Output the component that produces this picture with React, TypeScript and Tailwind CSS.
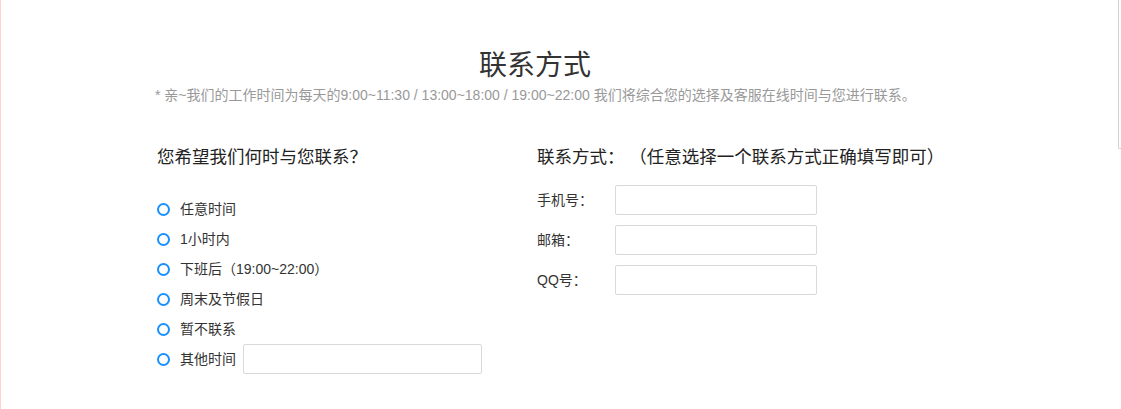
import React from "react";

const font = { fontFamily: '"Liberation Sans", Arial, "Noto Sans CJK SC", sans-serif' };

function Circle() {
  return <span className="box-border block h-[13px] w-[13px] shrink-0 rounded-full border-2 border-[#1890ff] bg-white" />;
}

function Radio({ children }: { children: React.ReactNode }) {
  return (
    <div className="flex h-[30px] items-center">
      <Circle />
      <span className="ml-[10px] text-[14px] text-[#333]">{children}</span>
    </div>
  );
}

function Field({ label }: { label: string }) {
  return (
    <div className="flex h-[30px] items-center">
      <span className="w-[78px] shrink-0 text-[14px] text-[#333]">{label}</span>
      <input className="box-border h-[30px] w-[202px] rounded-[2px] border border-[#d9d9d9] bg-white outline-none" />
    </div>
  );
}

export default function App() {
  return (
    <div className="flex h-[409px] w-[1121px] overflow-hidden bg-white" style={font}>
      <div className="w-px shrink-0 bg-[#ffd3cb]" />
      <div className="flex-1">
        <div className="box-content w-[760px] pl-[154px] pt-[46px]">
          <div className="text-center text-[28px] leading-[40px] text-[#333]">联系方式</div>
          <div className="mt-[-1px] whitespace-nowrap text-center text-[14px] leading-[20px] text-[#999]">
            * 亲~我们的工作时间为每天的9:00~11:30 / 13:00~18:00 / 19:00~22:00 我们将综合您的选择及客服在线时间与您进行联系。
          </div>
          <div className="mt-[40px] flex">
            <div className="w-[382px] shrink-0 pl-[2px]">
              <div className="text-[17.5px] leading-[24px] text-[#222]">您希望我们何时与您联系？</div>
              <div className="mt-[25px] flex flex-col">
                <Radio>任意时间</Radio>
                <Radio>1小时内</Radio>
                <Radio>下班后（19:00~22:00）</Radio>
                <Radio>周末及节假日</Radio>
                <Radio>暂不联系</Radio>
                <div className="flex h-[30px] items-center">
                  <Circle />
                  <span className="ml-[10px] text-[14px] text-[#333]">其他时间</span>
                  <input className="ml-[7px] box-border h-[30px] w-[239px] rounded-[2px] border border-[#d9d9d9] bg-white outline-none" />
                </div>
              </div>
            </div>
            <div className="flex-1">
              <div className="whitespace-nowrap text-[17.5px] leading-[24px] text-[#222]">
                联系方式： （任意选择一个联系方式正确填写即可）
              </div>
              <div className="mt-[16px] flex flex-col gap-[10px]">
                <Field label="手机号：" />
                <Field label="邮箱：" />
                <Field label="QQ号：" />
              </div>
            </div>
          </div>
        </div>
      </div>
      <div className="w-[3px] shrink-0">
        <div className="h-[149px] rounded-bl-[2px] border-b border-l border-[#d0d0d0]" />
      </div>
    </div>
  );
}
